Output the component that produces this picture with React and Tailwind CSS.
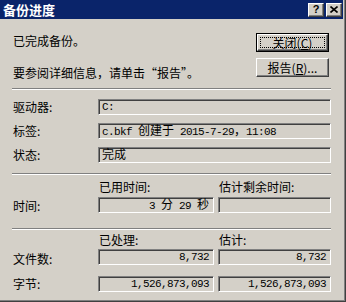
import React from 'react';

/* ── Win2000-style bits ─────────────────────────────────────────────────── */

const cjk = "font-['SimSun','Noto_Sans_CJK_SC',sans-serif]";
const mono = "font-['Liberation_Mono','Noto_Sans_CJK_SC',monospace]";

function Separator({ className = '' }) {
  return (
    <div className={`h-[2px] border-t border-t-[#808080] border-b border-b-white ${className}`} />
  );
}

function Field({ children, align = 'left' }) {
  return (
    <div
      className={`flex h-[16px] items-center whitespace-pre border border-t-[#808080] border-l-[#808080] border-r-white border-b-white bg-[#d4d0c8] shadow-[inset_1px_1px_0_#404040] ${
        align === 'right' ? 'justify-end pr-[4px]' : 'pl-[3px]'
      } ${mono} text-[11px] leading-[12px] tracking-[-0.6px] text-black`}
    >
      <span>{children}</span>
    </div>
  );
}

function Cjk({ children }) {
  return <span className={`${cjk} text-[12px] leading-[12px] tracking-normal`}>{children}</span>;
}

function Label({ children, className = '' }) {
  return (
    <div className={`flex h-[16px] items-center pl-[1px] text-[12px] leading-[14px] text-black ${className}`}>
      {children}
    </div>
  );
}

function Button({ children, isDefault }) {
  return (
    <div className={`h-[19px] w-[73px] ${isDefault ? 'border border-black' : ''}`}>
      <div className="flex h-full w-full border border-t-white border-l-white border-r-[#404040] border-b-[#404040] shadow-[inset_-1px_-1px_0_#808080]">
        <div
          className={`m-[2px] flex flex-1 items-center justify-center text-[12px] leading-none text-black ${
            isDefault ? 'border border-dotted border-black' : ''
          }`}
        >
          <span>{children}</span>
        </div>
      </div>
    </div>
  );
}

function CaptionButton({ children }) {
  return (
    <div className="flex h-[14px] w-[16px] items-center justify-center border border-t-white border-l-white border-r-[#404040] border-b-[#404040] bg-[#d4d0c8] shadow-[inset_-1px_-1px_0_#808080]">
      {children}
    </div>
  );
}

/* ── Page ─────────────────────────────────────────────────────────────── */

export default function App() {
  return (
    <div className={`h-[302px] w-[346px] overflow-hidden bg-[#d4d0c8] ${cjk}`}>
      <div className="flex h-full w-full flex-col border-r border-b border-r-[#404040] border-b-[#404040]">
        <div className="flex h-full w-full flex-col border-r border-b border-r-[#808080] border-b-[#808080] pr-[1px]">
          {/* ── Title bar ── */}
          <div className="flex h-[19px] items-center bg-[#0a246a] pl-[3px] pr-[1px]">
            <span className="flex-1 text-[13px] font-bold leading-none text-white">备份进度</span>
            <div className="flex gap-[2px]">
              <CaptionButton>
                <span className="font-['Liberation_Sans',sans-serif] text-[11px] font-bold leading-none text-black">?</span>
              </CaptionButton>
              <CaptionButton>
                <svg width="8" height="7" viewBox="0 0 8 7">
                  <path d="M0.5 0.5 L7.5 6.5 M7.5 0.5 L0.5 6.5" stroke="black" strokeWidth="1.6" />
                </svg>
              </CaptionButton>
            </div>
          </div>

          {/* ── Body ── */}
          <div className="flex flex-col pl-[12px] pr-[12px]">
            <div className="mt-[14px] flex h-[44px] items-start">
              <div className="flex flex-1 flex-col pl-[1px] text-[12px] leading-[16px] text-black">
                <span>已完成备份。</span>
                <span className="mt-[16px]">要参阅详细信息，请单击“报告”。</span>
              </div>
              <div className="mr-[2px] flex flex-col gap-[6px]">
                <Button isDefault>
                  关闭(<span className="underline">C</span>)
                </Button>
                <Button>
                  报告(<span className="underline">R</span>)...
                </Button>
              </div>
            </div>

            <Separator className="mt-[11px]" />

            <div className="mt-[9px] grid grid-cols-[86px_233px] gap-y-[8px]">
              <Label>驱动器:</Label>
              <Field>C:</Field>
              <Label>标签:</Label>
              <Field>
                c.bkf <Cjk>创建于</Cjk> 2015-7-29<Cjk>，</Cjk>11:08
              </Field>
              <Label>状态:</Label>
              <Field>
                <Cjk>完成</Cjk>
              </Field>
            </div>

            <Separator className="mt-[10px]" />

            <div className="mt-[4px] grid grid-cols-[82px_116px_113px] gap-x-[4px] gap-y-[2px]">
              <div />
              <Label>已用时间:</Label>
              <Label>估计剩余时间:</Label>
              <Label className="mt-[1px]">时间:</Label>
              <Field align="right">
                3 <Cjk>分</Cjk> 29 <Cjk>秒</Cjk>
              </Field>
              <Field align="right" />
            </div>

            <Separator className="mt-[14px]" />

            <div className="mt-[2px] grid grid-cols-[82px_116px_113px] gap-x-[4px] gap-y-[1px]">
              <div />
              <Label>已处理:</Label>
              <Label>估计:</Label>
              <Label className="mt-[2px]">文件数:</Label>
              <Field align="right">8,732</Field>
              <Field align="right">8,732</Field>
              <Label className="mt-[8px]">字节:</Label>
              <div className="mt-[8px]">
                <Field align="right">1,526,873,093</Field>
              </div>
              <div className="mt-[8px]">
                <Field align="right">1,526,873,093</Field>
              </div>
            </div>
          </div>
        </div>
      </div>
    </div>
  );
}
